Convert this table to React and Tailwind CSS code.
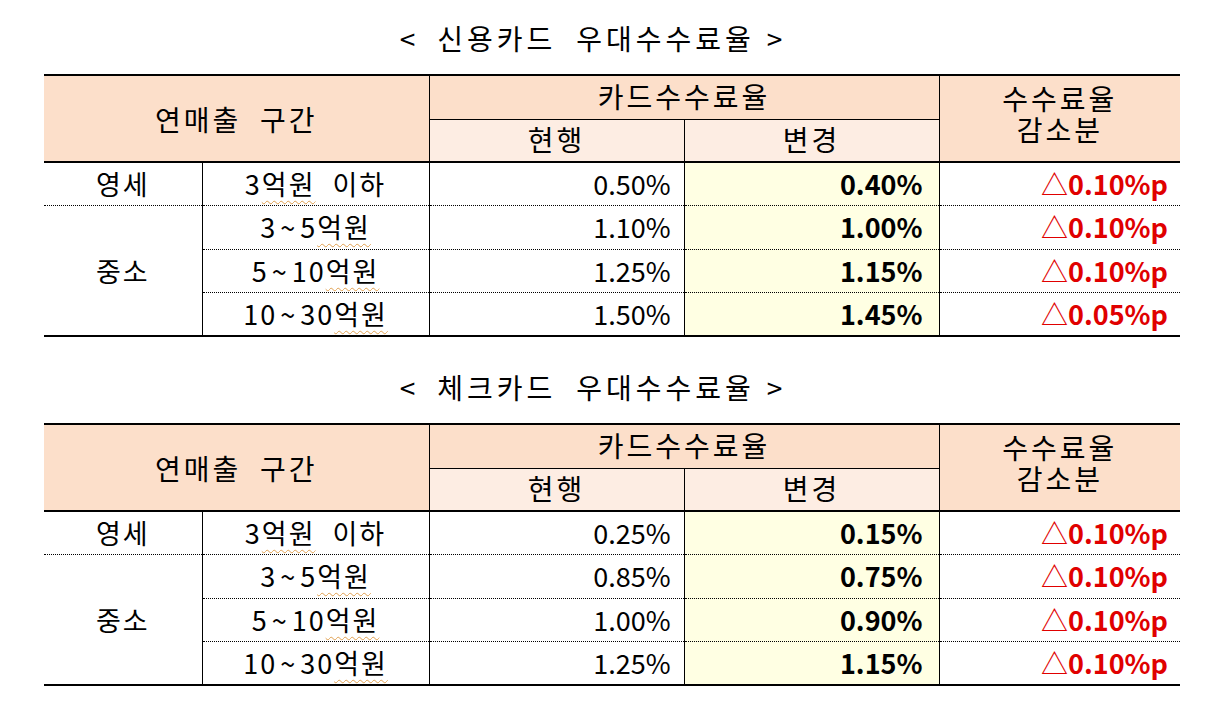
const tables = [
  {
    title: ["신용카드", "우대수수료율"],
    rows: [
      ["3", "이하", "0.50%", "0.40%", "0.10%p"],
      ["3~5", "", "1.10%", "1.00%", "0.10%p"],
      ["5~10", "", "1.25%", "1.15%", "0.10%p"],
      ["10~30", "", "1.50%", "1.45%", "0.05%p"],
    ],
  },
  {
    title: ["체크카드", "우대수수료율"],
    rows: [
      ["3", "이하", "0.25%", "0.15%", "0.10%p"],
      ["3~5", "", "0.85%", "0.75%", "0.10%p"],
      ["5~10", "", "1.00%", "0.90%", "0.10%p"],
      ["10~30", "", "1.25%", "1.15%", "0.10%p"],
    ],
  },
];

// bottom edge of a body cell: dotted between rows, solid under the last one
const edge = (i) => (i === 3 ? " border-b-2 border-b-black" : " border-b border-b-black [border-bottom-style:dotted]");

function Range({ pre, post }) {
  const [a, b] = pre.split("~");
  return (
    <span className="tracking-[2px] whitespace-pre">
      {a}
      {b !== undefined && (
        <>
          <span className="mx-[3px]">~</span>
          {b}
        </>
      )}
      <span className="underline decoration-wavy decoration-[#e0a050] decoration-1 underline-offset-[5px]">억원</span>
      {post && <span className="ml-[17px]">{post}</span>}
    </span>
  );
}

function FeeTable({ title, rows }) {
  return (
    <section className="w-[1136px]">
      <h2 className="flex h-[40px] items-center justify-center pr-[38px] text-[28px] tracking-[4px]">
        <span className="mr-[18px]">&lt;</span>
        <span className="mr-[20px]">{title[0]}</span>
        <span className="mr-[12px]">{title[1]}</span>
        <span>&gt;</span>
      </h2>
      <table className="mt-[16px] w-[1136px] table-fixed border-collapse text-[27px]">
        <colgroup>
          <col className="w-[158px]" />
          <col className="w-[227px]" />
          <col className="w-[255px]" />
          <col className="w-[255px]" />
          <col className="w-[241px]" />
        </colgroup>
        <thead className="text-[28px] tracking-[3px]">
          <tr className="h-[44px]">
            <th colSpan={2} rowSpan={2} className="border-t-2 border-b-2 border-r border-black bg-[#fcdfca] font-normal whitespace-pre">
              {"연매출  구간"}
            </th>
            <th colSpan={2} className="border-t-2 border-b border-r border-black bg-[#fcdfca] pb-[2px] font-normal leading-[30px]">
              카드수수료율
            </th>
            <th rowSpan={2} className="border-t-2 border-b-2 border-black bg-[#fcdfca] pb-[10px] font-normal leading-[31px]">
              수수료율
              <br />
              감소분
            </th>
          </tr>
          <tr className="h-[43px]">
            <th className="border-b-2 border-r border-black bg-[#fdede3] pb-[2px] font-normal leading-[30px]">현행</th>
            <th className="border-b-2 border-r border-black bg-[#fdede3] pb-[2px] font-normal leading-[30px]">변경</th>
          </tr>
        </thead>
        <tbody>
          {rows.map((r, i) => (
            <tr key={i} className="h-[43.5px] leading-[30px]">
              {i === 0 && <td className={"border-r border-r-black text-center tracking-[2px]" + edge(1)}>영세</td>}
              {i === 1 && (
                <td rowSpan={3} className={"border-r border-r-black text-center tracking-[2px]" + edge(3)}>
                  중소
                </td>
              )}
              <td className={"border-r border-r-black text-center" + edge(i)}>
                <Range pre={r[0]} post={r[1]} />
              </td>
              <td className={"border-r border-r-black pr-[13px] text-right" + edge(i)}>{r[2]}</td>
              <td className={"border-r border-r-black bg-[#ffffe3] pr-[16px] text-right font-bold" + edge(i)}>{r[3]}</td>
              <td className={"pr-[12px] text-right font-bold text-[#e00000]" + edge(i)}>
                <span className="font-normal">△</span>
                {r[4]}
              </td>
            </tr>
          ))}
        </tbody>
      </table>
    </section>
  );
}

export default function App() {
  return (
    <div
      className="min-h-[702px] w-[1207px] bg-white pl-[44px] pt-[18px] text-black"
      style={{ fontFamily: '"Noto Sans CJK KR", "Noto Sans", sans-serif' }}
    >
      <FeeTable {...tables[0]} />
      <div className="mt-[30px]">
        <FeeTable {...tables[1]} />
      </div>
    </div>
  );
}
